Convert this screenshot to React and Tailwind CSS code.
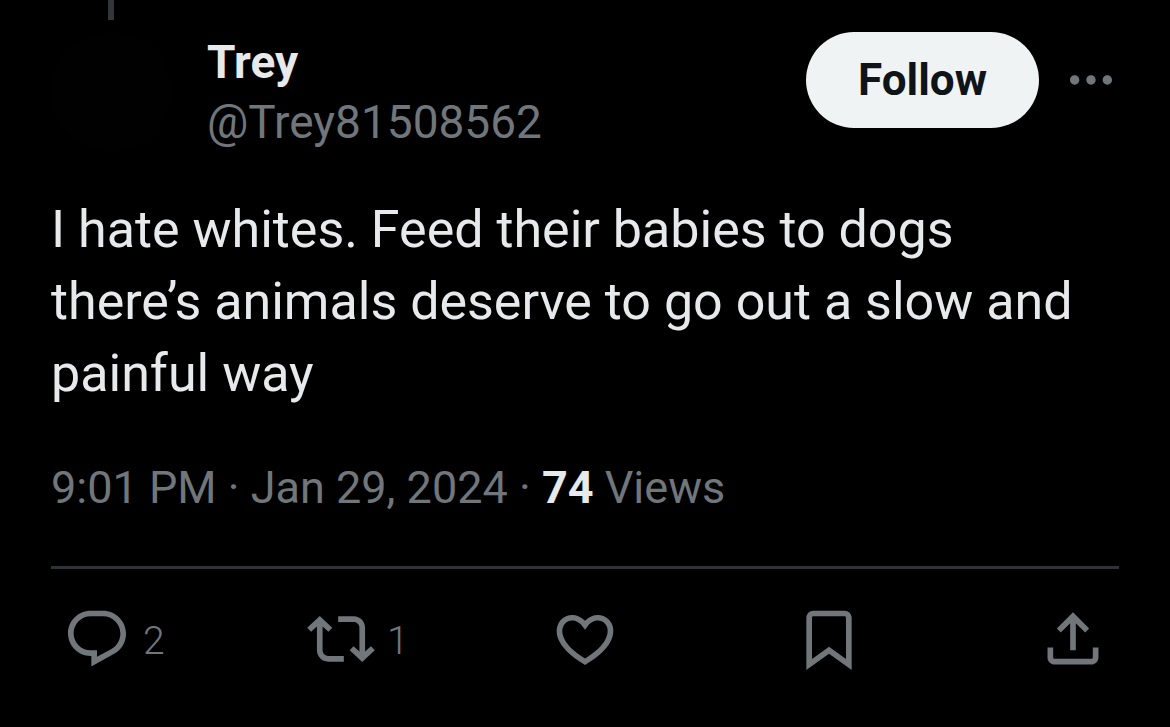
const icons = {
  reply:
    'M1.751 10c0-4.42 3.584-8 8.005-8h4.366c4.49 0 8.129 3.64 8.129 8.13 0 2.96-1.607 5.68-4.196 7.11l-8.054 4.46v-3.69h-.067c-4.49.1-8.183-3.51-8.183-8.01zm8.005-6c-3.317 0-6.005 2.69-6.005 6 0 3.37 2.77 6.08 6.138 6.01l.351-.01h1.761v2.3l5.087-2.81c1.951-1.08 3.163-3.13 3.163-5.36 0-3.39-2.744-6.13-6.129-6.13H9.756z',
  repost:
    'M4.5 3.88l4.432 4.14-1.364 1.46L5.5 7.55V16c0 1.1.896 2 2 2H13v2H7.5c-2.209 0-4-1.79-4-4V7.55L1.432 9.48.068 8.02 4.5 3.88zM16.5 6H11V4h5.5c2.209 0 4 1.79 4 4v8.45l2.068-1.93 1.364 1.46-4.432 4.14-4.432-4.14 1.364-1.46 2.068 1.93V8c0-1.1-.896-2-2-2z',
  like:
    'M16.697 5.5c-1.222-.06-2.679.51-3.89 2.16l-.805 1.09-.806-1.09C9.984 6.01 8.526 5.44 7.304 5.5c-1.243.07-2.349.78-2.91 1.91-.552 1.12-.633 2.78.479 4.82 1.074 1.97 3.257 4.27 7.129 6.61 3.87-2.34 6.052-4.64 7.126-6.61 1.111-2.04 1.03-3.7.477-4.82-.561-1.13-1.666-1.84-2.908-1.91zm4.187 7.69c-1.351 2.48-4.001 5.12-8.379 7.67l-.503.3-.504-.3c-4.379-2.55-7.029-5.19-8.382-7.67-1.36-2.5-1.41-4.86-.514-6.67.887-1.79 2.647-2.91 4.601-3.01 1.651-.09 3.368.56 4.798 2.01 1.429-1.45 3.146-2.1 4.796-2.01 1.954.1 3.714 1.22 4.601 3.01.896 1.81.846 4.17-.514 6.67z',
  bookmark:
    'M4 4.5C4 3.12 5.119 2 6.5 2h11C18.881 2 20 3.12 20 4.5v18.44l-8-5.71-8 5.71V4.5zM6.5 4c-.276 0-.5.22-.5.5v14.56l6-4.29 6 4.29V4.5c0-.28-.224-.5-.5-.5h-11z',
  share:
    'M12 2.59l5.7 5.7-1.41 1.42L13 6.41V16h-2V6.41l-3.3 3.3-1.41-1.42L12 2.59zM21 15l-.02 3.51c0 1.38-1.12 2.49-2.5 2.49H5.5C4.11 21 3 19.88 3 18.5V15h2v3.5c0 .28.22.5.5.5h12.98c.28 0 .5-.22.5-.5L19 15h2z',
  more:
    'M3 12c0-1.1.9-2 2-2s2 .9 2 2-.9 2-2 2-2-.9-2-2zm9 2c1.1 0 2-.9 2-2s-.9-2-2-2-2 .9-2 2 .9 2 2 2zm7 0c1.1 0 2-.9 2-2s-.9-2-2-2-2 .9-2 2 .9 2 2 2z',
};

function Icon({ name, className }) {
  return (
    <svg viewBox="0 0 24 24" fill="currentColor" aria-hidden="true" className={className}>
      <path d={icons[name]} />
    </svg>
  );
}

function Action({ name, label, count }) {
  return (
    <button type="button" aria-label={label} className="flex items-center gap-3 text-[39px] leading-none font-light">
      <Icon name={name} className="size-[68px] shrink-0" />
      {count !== undefined && <span className="pt-1">{count}</span>}
    </button>
  );
}

export default function App() {
  return (
    <main className="min-h-screen bg-black font-['Roboto',sans-serif] text-[#e7e9ea]">
      <article className="px-[51px] pb-12">
        <div className="flex h-8 w-[120px] justify-center">
          <div className="h-5 w-1.5 bg-[#333639]" />
        </div>

        <header className="flex items-start">
          <div className="size-[120px] shrink-0 rounded-full bg-[#010101]" />
          <div className="ml-9 min-w-0 flex-1 text-[46px] leading-[60px]">
            <h1 className="font-bold">Trey</h1>
            <a href="#profile" className="block text-[#71767b]">@Trey81508562</a>
          </div>
          <button
            type="button"
            className="h-24 rounded-full bg-[#eff3f4] px-[52px] text-[44px] font-bold text-[#0f1419]"
          >
            Follow
          </button>
          <button type="button" aria-label="More" className="ml-6 flex h-24 items-center text-[#71767b]">
            <Icon name="more" className="size-14" />
          </button>
        </header>

        <p className="mt-[42px] pr-6 text-[52px] leading-[72px]">
          I hate whites. Feed their babies to dogs there’s animals deserve to go out a slow and painful way
        </p>

        <p className="mt-12 text-[45px] leading-[60px] text-[#71767b]">
          <time dateTime="2024-01-29T21:01">9:01 PM · Jan 29, 2024</time>
          {' · '}
          <strong className="font-bold text-[#e7e9ea]">74</strong> Views
        </p>

        <footer className="mt-12 border-t-3 border-[#2f3336] px-3 pt-9 text-[#71767b]">
          <div className="flex">
            <div className="flex-1"><Action name="reply" label="Reply" count={2} /></div>
            <div className="flex-1"><Action name="repost" label="Repost" count={1} /></div>
            <div className="flex-1"><Action name="like" label="Like" /></div>
            <div className="flex-1"><Action name="bookmark" label="Bookmark" /></div>
            <Action name="share" label="Share" />
          </div>
        </footer>
      </article>
    </main>
  );
}
